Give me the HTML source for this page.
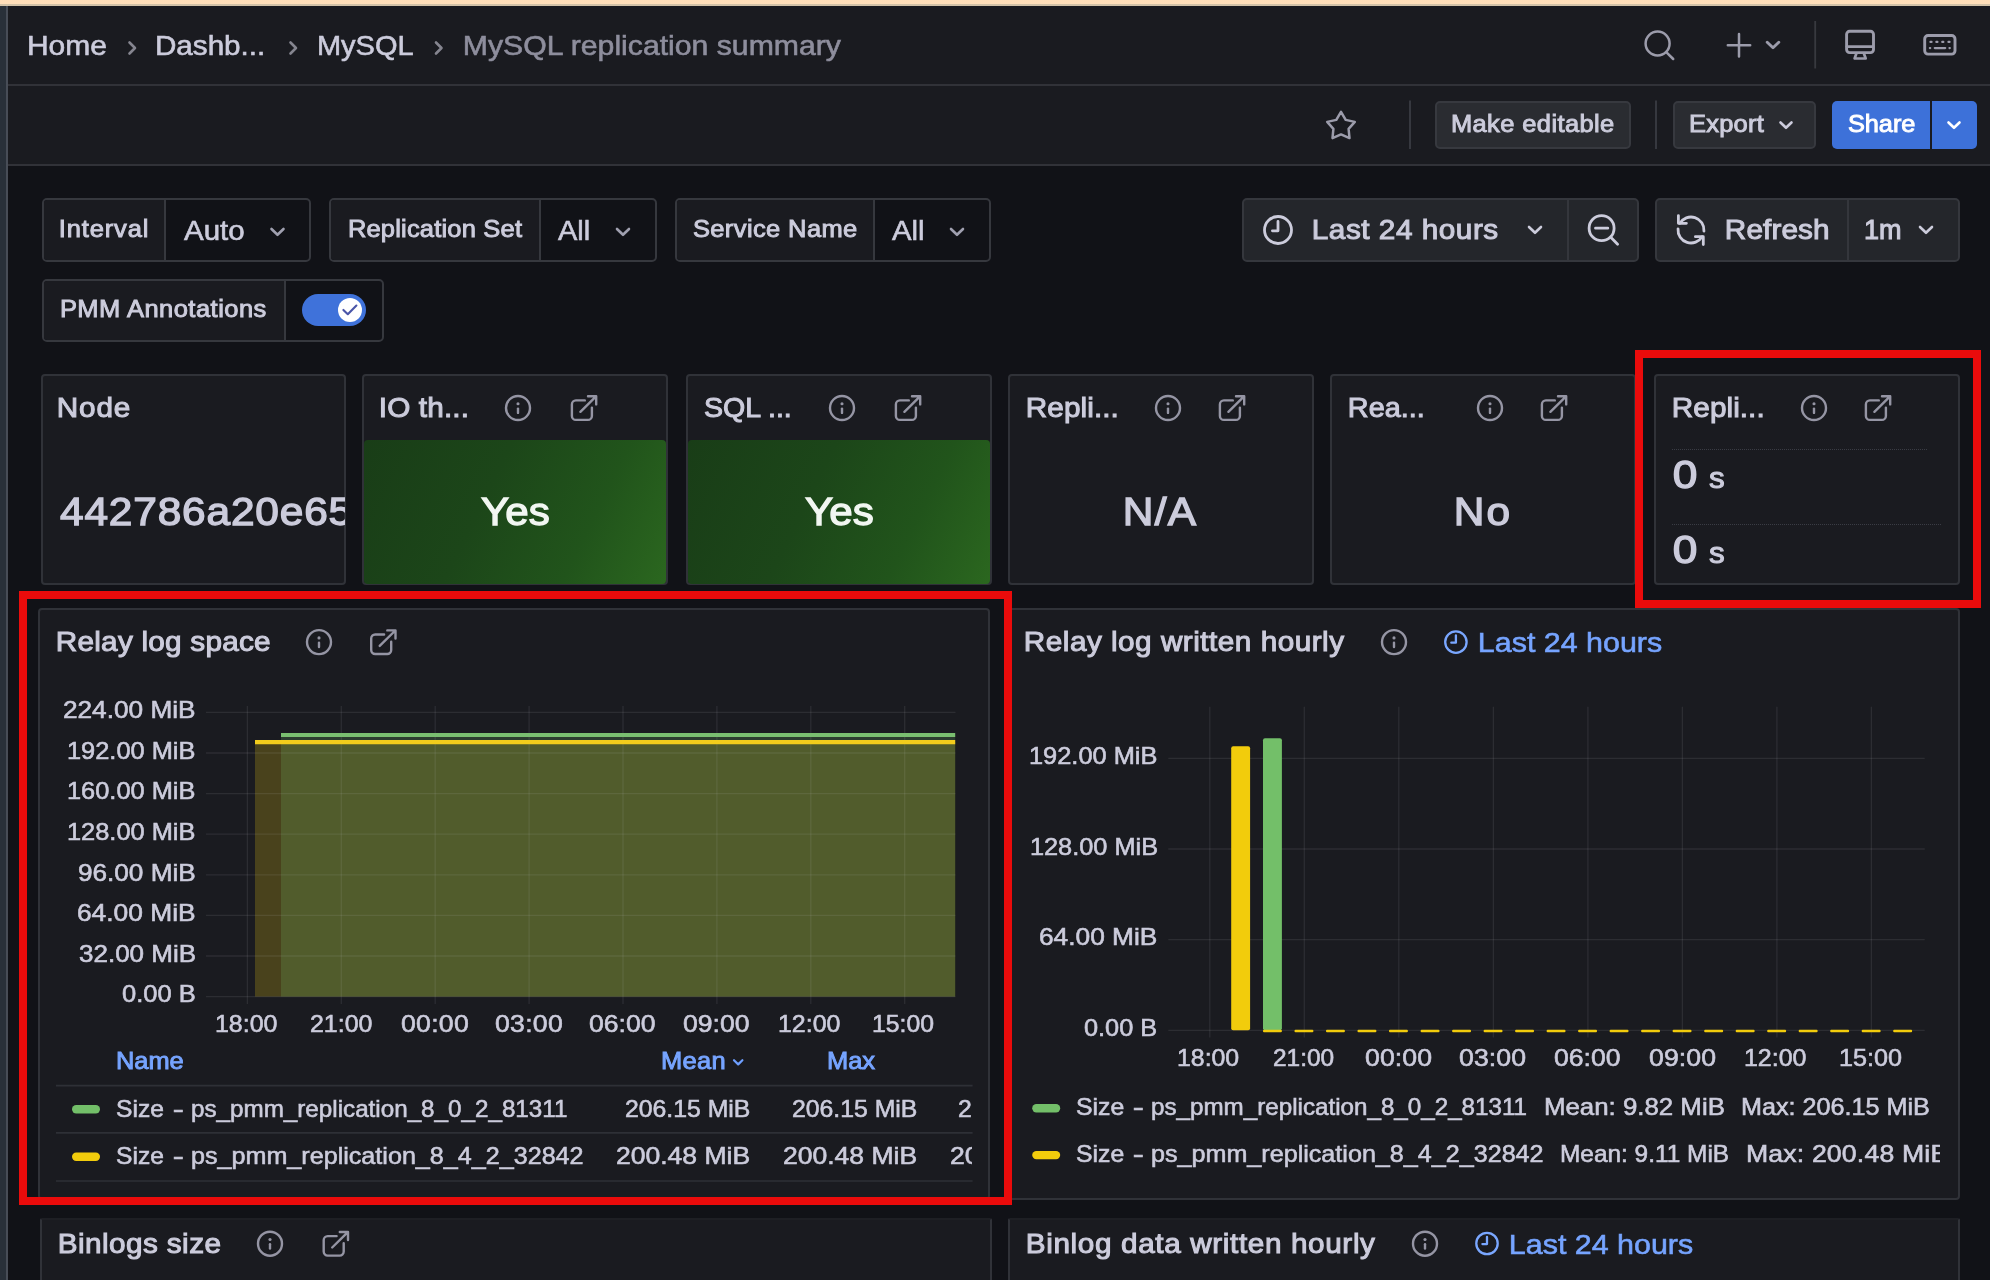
<!DOCTYPE html>
<html><head><meta charset="utf-8"><title>MySQL replication summary</title>
<style>
html,body{margin:0;padding:0;background:#111217;}
body{width:1990px;height:1280px;overflow:hidden;font-family:"Liberation Sans",sans-serif;}
#root{position:relative;width:1990px;height:1280px;overflow:hidden;background:#111217;}
.a{position:absolute;box-sizing:border-box;}
.t{position:absolute;white-space:nowrap;font-family:"Liberation Sans",sans-serif;}
.clip{position:absolute;overflow:hidden;}
.panel{position:absolute;box-sizing:border-box;background:#1a1b20;border:2px solid #303238;border-radius:4px;}
.vbox{position:absolute;box-sizing:border-box;border:2px solid #36383e;border-radius:5px;background:#111217;overflow:hidden;}
.vbox .lab{position:absolute;left:0;top:0;bottom:0;background:#1a1b20;border-right:2px solid #36383e;box-sizing:border-box;}
.tbox{position:absolute;box-sizing:border-box;border:2px solid #35373d;border-radius:5px;background:#24262b;overflow:hidden;}
.btn{position:absolute;box-sizing:border-box;border:2px solid #37393f;border-radius:5px;background:#2a2c31;}
.sep{position:absolute;width:1.5px;background:#34363c;}
svg{position:absolute;overflow:visible;}
.ic{fill:none;stroke:#9c9cab;stroke-width:2.5;stroke-linecap:round;stroke-linejoin:round;}
.icf{fill:none;stroke:#ccccdc;stroke-width:2.8;stroke-linecap:round;stroke-linejoin:round;}
.chev{fill:none;stroke:#b4b4c4;stroke-width:2.6;stroke-linecap:round;stroke-linejoin:round;}
.grid{stroke:#ccccdc;stroke-width:1.3;}
.red{position:absolute;box-sizing:border-box;border:8px solid #ea0b0b;}
#txt{position:absolute;left:0;top:0;width:1990px;height:1280px;will-change:transform;}

</style></head>
<body>
<div id="root">
<!-- chrome strips -->
<div class="a" style="left:0;top:0;width:1990px;height:6px;background:linear-gradient(#ffdeb8 0,#ffdfba 3.6px,#d2c1a6 4.2px,#d4c4aa 5.8px,#2a2420 6px)"></div>
<div class="a" style="left:0;top:6px;width:6px;height:1274px;background:#293039"></div>
<div class="a" style="left:6px;top:6px;width:2px;height:1274px;background:#484d57"></div>
<!-- header rows -->
<div class="a" style="left:8px;top:6px;width:1982px;height:78px;background:#1a1b20"></div>
<div class="a" style="left:8px;top:84px;width:1982px;height:2px;background:#313238"></div>
<div class="a" style="left:8px;top:86px;width:1982px;height:78px;background:#1a1b20"></div>
<div class="a" style="left:8px;top:164px;width:1982px;height:2px;background:#313238"></div>

<!-- breadcrumb chevrons -->
<svg style="left:0;top:0" width="1990" height="170">
  <g fill="none" stroke="#85858f" stroke-width="2.6" stroke-linecap="round" stroke-linejoin="round">
    <path d="M129.5 42.5 L135 48 L129.5 53.5"/>
    <path d="M290.5 42.5 L296 48 L290.5 53.5"/>
    <path d="M436 42.5 L441.5 48 L436 53.5"/>
  </g>
  <!-- search -->
  <g class="ic" stroke-width="3">
    <circle cx="1657.6" cy="43.5" r="12"/>
    <path d="M1667 52.8 L1673.2 59"/>
    <!-- plus -->
    <path d="M1739 34 V56.5 M1727.8 45.2 H1750.2"/>
    <path d="M1767.2 42.2 L1773 47.8 L1778.8 42.2" stroke-width="2.9"/>
    <!-- monitor -->
    <rect x="1846.6" y="31.3" width="26.9" height="21.3" rx="3" stroke-width="2.9"/>
    <path d="M1847 46.6 H1873" stroke-width="2.9"/>
    <path d="M1856.3 53.8 L1854.6 58.5 H1865.7 L1864 53.8" stroke-width="2.7"/>
    <!-- keyboard -->
    <rect x="1924.7" y="35.5" width="30.3" height="18.6" rx="3.4" stroke-width="2.9"/>
  </g>
  <g stroke="#9c9cab" stroke-width="2.3" stroke-linecap="round">
    <path d="M1930.5 41.9 h1 M1936.4 41.9 h1 M1942.3 41.9 h1 M1948.5 41.9 h1"/>
    <path d="M1929.9 48.1 h0.3 M1934.8 48.1 h10.4 M1949.5 48.1 h0.3"/>
  </g>
  <rect x="1814.3" y="21" width="1.8" height="47.5" fill="#38393f"/>
  <!-- star -->
  <path class="ic" stroke-width="3" d="M1341.0 111.9 L1345.7 119.9 L1354.8 121.9 L1348.6 128.9 L1349.5 138.1 L1341.0 134.4 L1332.5 138.1 L1333.4 128.9 L1327.2 121.9 L1336.3 119.9 Z"/>
  <rect x="1409.1" y="100.5" width="1.8" height="48.5" fill="#3a3c43"/>
  <rect x="1655.1" y="100.5" width="1.8" height="48.5" fill="#3a3c43"/>
</svg>

<!-- toolbar buttons -->
<div class="btn" style="left:1435px;top:101px;width:196px;height:48px"></div>
<div class="btn" style="left:1673px;top:101px;width:143px;height:48px"></div>
<div class="a" style="left:1832px;top:101px;width:98px;height:48px;background:#3d71d9;border-radius:5px 0 0 5px"></div>
<div class="a" style="left:1932px;top:101px;width:44.5px;height:48px;background:#3d71d9;border-radius:0 5px 5px 0"></div>
<svg style="left:0;top:0" width="1990" height="170">
  <path class="chev" style="stroke:#ccccdc" d="M1780.5 122.5 L1786 127.8 L1791.5 122.5"/>
  <path class="chev" stroke="#ffffff" style="stroke:#fff" d="M1948.5 122.5 L1954 127.8 L1959.5 122.5"/>
</svg>

<!-- variable boxes -->
<div class="vbox" style="left:42px;top:198px;width:268.5px;height:63.5px"><div class="lab" style="width:122px"></div></div>
<div class="vbox" style="left:329px;top:198px;width:328px;height:63.5px"><div class="lab" style="width:209.8px"></div></div>
<div class="vbox" style="left:675px;top:198px;width:315.7px;height:63.5px"><div class="lab" style="width:198.1px"></div></div>
<div class="vbox" style="left:42px;top:278.5px;width:341.5px;height:63.5px"><div class="lab" style="width:242px"></div></div>
<svg style="left:0;top:0" width="1990" height="360">
  <path class="chev" stroke-width="2.5" style="stroke:#a0a0b0" d="M271.5 229 L277.5 234.8 L283.5 229"/>
  <path class="chev" stroke-width="2.5" style="stroke:#a0a0b0" d="M617 229 L623 234.8 L629 229"/>
  <path class="chev" stroke-width="2.5" style="stroke:#a0a0b0" d="M951 229 L957 234.8 L963 229"/>
</svg>
<!-- toggle -->
<div class="a" style="left:301.9px;top:293.8px;width:64.2px;height:32.4px;border-radius:16.2px;background:#3f72da"></div>
<div class="a" style="left:337.8px;top:297.8px;width:24.4px;height:24.4px;border-radius:13px;background:#ffffff"></div>
<svg style="left:0;top:0" width="1990" height="360"><path d="M343.4 309.9 L347.8 314.2 L356.4 305.5" fill="none" stroke="#4a55a8" stroke-width="2.1" stroke-linecap="round" stroke-linejoin="round"/></svg>

<!-- time picker / refresh -->
<div class="tbox" style="left:1242px;top:198px;width:396.5px;height:63.5px"></div>
<div class="sep" style="left:1567.3px;top:199.5px;height:60.5px"></div>
<div class="tbox" style="left:1655px;top:198px;width:304.5px;height:63.5px"></div>
<div class="sep" style="left:1847.2px;top:199.5px;height:60.5px"></div>
<svg style="left:0;top:0" width="1990" height="360">
  <g class="icf">
    <circle cx="1278" cy="230" r="13.5"/>
    <path d="M1278 221.5 V230.8 H1272.4"/>
    <circle cx="1601.6" cy="228.2" r="12.5"/>
    <path d="M1595.5 228.2 H1607.8 M1611 237.6 L1617.6 244.2"/>
    <!-- refresh -->
    <path d="M1679.8 223.4 A13 13 0 0 1 1703.95 231.1 M1702.2 236.6 A13 13 0 0 1 1678.05 228.9"/>
    <path d="M1678.4 215.6 V223.3 H1686.4 M1703.3 244.6 V236.7 H1695.4"/>
  </g>
  <path class="chev" style="stroke:#ccccdc" d="M1529 227 L1535 232.8 L1541 227"/>
  <path class="chev" style="stroke:#ccccdc" d="M1920 227 L1926 232.8 L1932 227"/>
</svg>

<!-- stat panels -->
<div class="panel" style="left:40.5px;top:374.3px;width:305.5px;height:211.2px"></div>
<div class="panel" style="left:362px;top:374.3px;width:305.8px;height:211.2px"></div>
<div class="panel" style="left:686px;top:374.3px;width:305.8px;height:211.2px"></div>
<div class="panel" style="left:1008.2px;top:374.3px;width:305.8px;height:211.2px"></div>
<div class="panel" style="left:1330.4px;top:374.3px;width:305.8px;height:211.2px"></div>
<div class="panel" style="left:1654px;top:374.3px;width:305.8px;height:211.2px"></div>
<div class="a" style="left:363.6px;top:440px;width:302.6px;height:143.8px;border-radius:4px;background:linear-gradient(116deg,#193d17 0%,#1c4619 40%,#21541b 72%,#2b671f 100%)"></div>
<div class="a" style="left:687.6px;top:440px;width:302.6px;height:143.8px;border-radius:4px;background:linear-gradient(116deg,#193d17 0%,#1c4619 40%,#21541b 72%,#2b671f 100%)"></div>
<div class="a" style="left:1672px;top:449.4px;width:255px;height:0;border-top:1.2px dotted #3a3c44"></div>
<div class="a" style="left:1672px;top:524.4px;width:269px;height:0;border-top:1.2px dotted #3a3c44"></div>

<!-- graph panels -->
<div class="panel" style="left:38.3px;top:608.3px;width:952px;height:591.7px"></div>
<div class="panel" style="left:1008.2px;top:608.3px;width:951.8px;height:591.7px"></div>
<div class="panel" style="left:40px;top:1217.5px;width:952px;height:100px;border-top-color:#1e1f24;border-radius:2px"></div>
<div class="panel" style="left:1008.2px;top:1217.5px;width:951.6px;height:100px;border-top-color:#1e1f24;border-radius:2px"></div>
<!--GEN-->
<svg style="left:0;top:0" width="1990" height="1280">
<g fill="none" stroke="#9595a4" stroke-width="2.4" stroke-linecap="round"><circle cx="518" cy="408" r="12"/><path d="M518 408.6 V412.9"/></g><circle cx="518" cy="403.8" r="1.55" fill="#9595a4"/>
<g fill="none" stroke="#9595a4" stroke-width="2.4" stroke-linecap="round" stroke-linejoin="round"><path d="M584.8000000000001 400.4 H575.9 a4 4 0 0 0 -4 4 V415.9 a4 4 0 0 0 4 4 H587.9 a4 4 0 0 0 4 -4 V407.59999999999997"/><path d="M580.4 411.79999999999995 L596.0 396.4 M588.0 396.29999999999995 H596.2 V404.4"/></g>
<g fill="none" stroke="#9595a4" stroke-width="2.4" stroke-linecap="round"><circle cx="842" cy="408" r="12"/><path d="M842 408.6 V412.9"/></g><circle cx="842" cy="403.8" r="1.55" fill="#9595a4"/>
<g fill="none" stroke="#9595a4" stroke-width="2.4" stroke-linecap="round" stroke-linejoin="round"><path d="M908.8000000000001 400.4 H899.9 a4 4 0 0 0 -4 4 V415.9 a4 4 0 0 0 4 4 H911.9 a4 4 0 0 0 4 -4 V407.59999999999997"/><path d="M904.4 411.79999999999995 L920.0 396.4 M912.0 396.29999999999995 H920.2 V404.4"/></g>
<g fill="none" stroke="#9595a4" stroke-width="2.4" stroke-linecap="round"><circle cx="1168" cy="408" r="12"/><path d="M1168 408.6 V412.9"/></g><circle cx="1168" cy="403.8" r="1.55" fill="#9595a4"/>
<g fill="none" stroke="#9595a4" stroke-width="2.4" stroke-linecap="round" stroke-linejoin="round"><path d="M1232.8 400.4 H1223.8999999999999 a4 4 0 0 0 -4 4 V415.9 a4 4 0 0 0 4 4 H1235.8999999999999 a4 4 0 0 0 4 -4 V407.59999999999997"/><path d="M1228.3999999999999 411.79999999999995 L1244.0 396.4 M1236.0 396.29999999999995 H1244.1999999999998 V404.4"/></g>
<g fill="none" stroke="#9595a4" stroke-width="2.4" stroke-linecap="round"><circle cx="1490" cy="408" r="12"/><path d="M1490 408.6 V412.9"/></g><circle cx="1490" cy="403.8" r="1.55" fill="#9595a4"/>
<g fill="none" stroke="#9595a4" stroke-width="2.4" stroke-linecap="round" stroke-linejoin="round"><path d="M1554.8 400.4 H1545.8999999999999 a4 4 0 0 0 -4 4 V415.9 a4 4 0 0 0 4 4 H1557.8999999999999 a4 4 0 0 0 4 -4 V407.59999999999997"/><path d="M1550.3999999999999 411.79999999999995 L1566.0 396.4 M1558.0 396.29999999999995 H1566.1999999999998 V404.4"/></g>
<g fill="none" stroke="#9595a4" stroke-width="2.4" stroke-linecap="round"><circle cx="1814" cy="408" r="12"/><path d="M1814 408.6 V412.9"/></g><circle cx="1814" cy="403.8" r="1.55" fill="#9595a4"/>
<g fill="none" stroke="#9595a4" stroke-width="2.4" stroke-linecap="round" stroke-linejoin="round"><path d="M1878.8 400.4 H1869.8999999999999 a4 4 0 0 0 -4 4 V415.9 a4 4 0 0 0 4 4 H1881.8999999999999 a4 4 0 0 0 4 -4 V407.59999999999997"/><path d="M1874.3999999999999 411.79999999999995 L1890.0 396.4 M1882.0 396.29999999999995 H1890.1999999999998 V404.4"/></g>
<g fill="none" stroke="#9595a4" stroke-width="2.4" stroke-linecap="round"><circle cx="319" cy="642.1" r="12"/><path d="M319 642.7 V647.0"/></g><circle cx="319" cy="637.9" r="1.55" fill="#9595a4"/>
<g fill="none" stroke="#9595a4" stroke-width="2.4" stroke-linecap="round" stroke-linejoin="round"><path d="M384.09999999999997 634.5 H375.2 a4 4 0 0 0 -4 4 V650.0 a4 4 0 0 0 4 4 H387.2 a4 4 0 0 0 4 -4 V641.7"/><path d="M379.7 645.9 L395.29999999999995 630.5 M387.29999999999995 630.4 H395.5 V638.5"/></g>
<g fill="none" stroke="#9595a4" stroke-width="2.4" stroke-linecap="round"><circle cx="1394" cy="642.1" r="12"/><path d="M1394 642.7 V647.0"/></g><circle cx="1394" cy="637.9" r="1.55" fill="#9595a4"/>
<g fill="none" stroke="#7aa7ff" stroke-width="2.3" stroke-linecap="round" stroke-linejoin="round"><circle cx="1455.9" cy="642.1" r="10.7"/><path d="M1455.9 635.5 V642.7 H1451.3000000000002"/></g>
<g fill="none" stroke="#9595a4" stroke-width="2.4" stroke-linecap="round"><circle cx="270" cy="1243.7" r="12"/><path d="M270 1244.3 V1248.6000000000001"/></g><circle cx="270" cy="1239.5" r="1.55" fill="#9595a4"/>
<g fill="none" stroke="#9595a4" stroke-width="2.4" stroke-linecap="round" stroke-linejoin="round"><path d="M336.59999999999997 1236.1 H327.7 a4 4 0 0 0 -4 4 V1251.6 a4 4 0 0 0 4 4 H339.7 a4 4 0 0 0 4 -4 V1243.3"/><path d="M332.2 1247.5 L347.79999999999995 1232.1 M339.79999999999995 1232.0 H348.0 V1240.1"/></g>
<g fill="none" stroke="#9595a4" stroke-width="2.4" stroke-linecap="round"><circle cx="1425" cy="1243.7" r="12"/><path d="M1425 1244.3 V1248.6000000000001"/></g><circle cx="1425" cy="1239.5" r="1.55" fill="#9595a4"/>
<g fill="none" stroke="#7aa7ff" stroke-width="2.3" stroke-linecap="round" stroke-linejoin="round"><circle cx="1487" cy="1243.5" r="10.7"/><path d="M1487 1236.9 V1244.1 H1482.4"/></g>
</svg>
<svg style="left:0;top:0" width="1990" height="1280">
<rect x="255" y="742.2" width="700.2" height="254.4" fill="#f2cc0c" fill-opacity="0.22"/>
<rect x="281" y="735.0" width="674.2" height="261.6" fill="#73bf69" fill-opacity="0.21"/>
<line class="grid" x1="206" x2="955.5" y1="996.6" y2="996.6" stroke-opacity="0.10"/>
<line class="grid" x1="206" x2="955.5" y1="956.0" y2="956.0" stroke-opacity="0.10"/>
<line class="grid" x1="206" x2="955.5" y1="915.4" y2="915.4" stroke-opacity="0.10"/>
<line class="grid" x1="206" x2="955.5" y1="874.8" y2="874.8" stroke-opacity="0.10"/>
<line class="grid" x1="206" x2="955.5" y1="834.2" y2="834.2" stroke-opacity="0.10"/>
<line class="grid" x1="206" x2="955.5" y1="793.6" y2="793.6" stroke-opacity="0.10"/>
<line class="grid" x1="206" x2="955.5" y1="753.0" y2="753.0" stroke-opacity="0.10"/>
<line class="grid" x1="206" x2="955.5" y1="712.4" y2="712.4" stroke-opacity="0.10"/>
<line class="grid" x1="247.4" x2="247.4" y1="706" y2="1004" stroke-opacity="0.10"/>
<line class="grid" x1="341.3" x2="341.3" y1="706" y2="1004" stroke-opacity="0.10"/>
<line class="grid" x1="435.2" x2="435.2" y1="706" y2="1004" stroke-opacity="0.10"/>
<line class="grid" x1="529.1" x2="529.1" y1="706" y2="1004" stroke-opacity="0.10"/>
<line class="grid" x1="623.0" x2="623.0" y1="706" y2="1004" stroke-opacity="0.10"/>
<line class="grid" x1="716.9" x2="716.9" y1="706" y2="1004" stroke-opacity="0.10"/>
<line class="grid" x1="810.8" x2="810.8" y1="706" y2="1004" stroke-opacity="0.10"/>
<line class="grid" x1="904.7" x2="904.7" y1="706" y2="1004" stroke-opacity="0.10"/>
<line x1="281" x2="955.2" y1="735.0" y2="735.0" stroke="#7abf70" stroke-width="4.1"/>
<line x1="255" x2="955.2" y1="742.2" y2="742.2" stroke="#f2cc1c" stroke-width="4.2"/>
<line x1="56" x2="972.6" y1="1085.6" y2="1085.6" stroke="#2e3036" stroke-width="1.6"/>
<line x1="56" x2="972.6" y1="1132.9" y2="1132.9" stroke="#2e3036" stroke-width="1.6"/>
<line x1="56" x2="972.6" y1="1181" y2="1181" stroke="#2e3036" stroke-width="1.6"/>
<rect x="72" y="1105" width="28" height="8.4" rx="4.2" fill="#73bf69"/>
<rect x="72" y="1152.6" width="28" height="8.4" rx="4.2" fill="#f2cc0c"/>
<path d="M734 1060.2 L738.2 1064.4 L742.4 1060.2" fill="none" stroke="#6e9fff" stroke-width="2.2" stroke-linecap="round" stroke-linejoin="round"/>
</svg>
<svg style="left:0;top:0" width="1990" height="1280">
<line class="grid" x1="1168.3" x2="1924.7" y1="1030.3" y2="1030.3" stroke-opacity="0.10"/>
<line class="grid" x1="1168.3" x2="1924.7" y1="939.6" y2="939.6" stroke-opacity="0.10"/>
<line class="grid" x1="1168.3" x2="1924.7" y1="849.0" y2="849.0" stroke-opacity="0.10"/>
<line class="grid" x1="1168.3" x2="1924.7" y1="758.3" y2="758.3" stroke-opacity="0.10"/>
<line class="grid" x1="1209.8" x2="1209.8" y1="706.8" y2="1037.5" stroke-opacity="0.10"/>
<line class="grid" x1="1304.3" x2="1304.3" y1="706.8" y2="1037.5" stroke-opacity="0.10"/>
<line class="grid" x1="1398.8" x2="1398.8" y1="706.8" y2="1037.5" stroke-opacity="0.10"/>
<line class="grid" x1="1493.4" x2="1493.4" y1="706.8" y2="1037.5" stroke-opacity="0.10"/>
<line class="grid" x1="1587.9" x2="1587.9" y1="706.8" y2="1037.5" stroke-opacity="0.10"/>
<line class="grid" x1="1682.4" x2="1682.4" y1="706.8" y2="1037.5" stroke-opacity="0.10"/>
<line class="grid" x1="1776.9" x2="1776.9" y1="706.8" y2="1037.5" stroke-opacity="0.10"/>
<line class="grid" x1="1871.4" x2="1871.4" y1="706.8" y2="1037.5" stroke-opacity="0.10"/>
<rect x="1231.2" y="746.3" width="18.9" height="284.0" rx="2" fill="#f2cc0c"/>
<rect x="1263" y="738.3" width="18.9" height="292.0" rx="2" fill="#73bf69"/>
<rect x="1263.0" y="1029.7" width="18.9" height="2.6" rx="1" fill="#f2cc0c"/>
<rect x="1294.5" y="1029.7" width="18.9" height="2.6" rx="1" fill="#f2cc0c"/>
<rect x="1326.0" y="1029.7" width="18.9" height="2.6" rx="1" fill="#f2cc0c"/>
<rect x="1357.5" y="1029.7" width="18.9" height="2.6" rx="1" fill="#f2cc0c"/>
<rect x="1389.0" y="1029.7" width="18.9" height="2.6" rx="1" fill="#f2cc0c"/>
<rect x="1420.6" y="1029.7" width="18.9" height="2.6" rx="1" fill="#f2cc0c"/>
<rect x="1452.1" y="1029.7" width="18.9" height="2.6" rx="1" fill="#f2cc0c"/>
<rect x="1483.6" y="1029.7" width="18.9" height="2.6" rx="1" fill="#f2cc0c"/>
<rect x="1515.1" y="1029.7" width="18.9" height="2.6" rx="1" fill="#f2cc0c"/>
<rect x="1546.6" y="1029.7" width="18.9" height="2.6" rx="1" fill="#f2cc0c"/>
<rect x="1578.1" y="1029.7" width="18.9" height="2.6" rx="1" fill="#f2cc0c"/>
<rect x="1609.6" y="1029.7" width="18.9" height="2.6" rx="1" fill="#f2cc0c"/>
<rect x="1641.1" y="1029.7" width="18.9" height="2.6" rx="1" fill="#f2cc0c"/>
<rect x="1672.6" y="1029.7" width="18.9" height="2.6" rx="1" fill="#f2cc0c"/>
<rect x="1704.2" y="1029.7" width="18.9" height="2.6" rx="1" fill="#f2cc0c"/>
<rect x="1735.7" y="1029.7" width="18.9" height="2.6" rx="1" fill="#f2cc0c"/>
<rect x="1767.2" y="1029.7" width="18.9" height="2.6" rx="1" fill="#f2cc0c"/>
<rect x="1798.7" y="1029.7" width="18.9" height="2.6" rx="1" fill="#f2cc0c"/>
<rect x="1830.2" y="1029.7" width="18.9" height="2.6" rx="1" fill="#f2cc0c"/>
<rect x="1861.7" y="1029.7" width="18.9" height="2.6" rx="1" fill="#f2cc0c"/>
<rect x="1893.2" y="1029.7" width="18.9" height="2.6" rx="1" fill="#f2cc0c"/>
<rect x="1032.2" y="1104" width="28" height="8.4" rx="4.2" fill="#73bf69"/>
<rect x="1032.2" y="1150.9" width="28" height="8.4" rx="4.2" fill="#f2cc0c"/>
</svg>

<div id="txt">
<span class="t" style="left:27.30px;top:30.86px;font-size:28.28px;line-height:28.28px;letter-spacing:0.000px;color:#ccccdc;-webkit-text-stroke:0.6px #ccccdc;transform-origin:2.00px 50%;transform:scaleX(1.062);">Home</span>
<span class="t" style="left:155.30px;top:30.86px;font-size:28.28px;line-height:28.28px;letter-spacing:0.000px;color:#ccccdc;-webkit-text-stroke:0.6px #ccccdc;transform-origin:2.00px 50%;transform:scaleX(1.049);">Dashb...</span>
<span class="t" style="left:316.90px;top:30.86px;font-size:28.28px;line-height:28.28px;letter-spacing:0.000px;color:#ccccdc;-webkit-text-stroke:0.6px #ccccdc;transform-origin:2.00px 50%;transform:scaleX(1.025);">MySQL</span>
<span class="t" style="left:462.70px;top:30.86px;font-size:28.28px;line-height:28.28px;letter-spacing:0.000px;color:#8e8e9d;-webkit-text-stroke:0.6px #8e8e9d;transform-origin:2.00px 50%;transform:scaleX(1.068);">MySQL replication summary</span>
<span class="t" style="left:1451.25px;top:112.97px;font-size:23.16px;line-height:23.16px;letter-spacing:0.362px;color:#ccccdc;-webkit-text-stroke:0.9px #ccccdc;transform-origin:1.00px 50%;transform:scaleX(1.100);">Make editable</span>
<span class="t" style="left:1689.25px;top:112.97px;font-size:23.16px;line-height:23.16px;letter-spacing:0.247px;color:#ccccdc;-webkit-text-stroke:0.9px #ccccdc;transform-origin:1.00px 50%;transform:scaleX(1.100);">Export</span>
<span class="t" style="left:1848.25px;top:112.97px;font-size:23.16px;line-height:23.16px;letter-spacing:0.000px;color:#ffffff;-webkit-text-stroke:0.9px #ffffff;transform-origin:1.00px 50%;transform:scaleX(1.093);">Share</span>
<span class="t" style="left:58.95px;top:218.47px;font-size:23.16px;line-height:23.16px;letter-spacing:0.783px;color:#ccccdc;-webkit-text-stroke:0.9px #ccccdc;transform-origin:2.00px 50%;transform:scaleX(1.100);">Interval</span>
<span class="t" style="left:183.80px;top:215.76px;font-size:28.28px;line-height:28.28px;letter-spacing:0.000px;color:#ccccdc;-webkit-text-stroke:0.6px #ccccdc;transform-origin:-0.00px 50%;transform:scaleX(1.043);">Auto</span>
<span class="t" style="left:347.65px;top:218.47px;font-size:23.16px;line-height:23.16px;letter-spacing:0.179px;color:#ccccdc;-webkit-text-stroke:0.9px #ccccdc;transform-origin:1.00px 50%;transform:scaleX(1.100);">Replication Set</span>
<span class="t" style="left:558.20px;top:215.76px;font-size:28.28px;line-height:28.28px;letter-spacing:0.000px;color:#ccccdc;-webkit-text-stroke:0.6px #ccccdc;transform-origin:-0.00px 50%;transform:scaleX(1.025);">All</span>
<span class="t" style="left:692.65px;top:218.47px;font-size:23.16px;line-height:23.16px;letter-spacing:0.364px;color:#ccccdc;-webkit-text-stroke:0.9px #ccccdc;transform-origin:1.00px 50%;transform:scaleX(1.100);">Service Name</span>
<span class="t" style="left:891.90px;top:215.76px;font-size:28.28px;line-height:28.28px;letter-spacing:0.000px;color:#ccccdc;-webkit-text-stroke:0.6px #ccccdc;transform-origin:-0.00px 50%;transform:scaleX(1.035);">All</span>
<span class="t" style="left:59.95px;top:298.47px;font-size:23.16px;line-height:23.16px;letter-spacing:0.441px;color:#ccccdc;-webkit-text-stroke:0.9px #ccccdc;transform-origin:1.00px 50%;transform:scaleX(1.100);">PMM Annotations</span>
<span class="t" style="left:1311.90px;top:216.58px;font-size:27.02px;line-height:27.02px;letter-spacing:0.476px;color:#ccccdc;-webkit-text-stroke:1.0px #ccccdc;transform-origin:2.00px 50%;transform:scaleX(1.100);">Last 24 hours</span>
<span class="t" style="left:1725.20px;top:216.58px;font-size:27.02px;line-height:27.02px;letter-spacing:0.117px;color:#ccccdc;-webkit-text-stroke:1.0px #ccccdc;transform-origin:2.00px 50%;transform:scaleX(1.100);">Refresh</span>
<span class="t" style="left:1863.90px;top:216.58px;font-size:27.02px;line-height:27.02px;letter-spacing:0.000px;color:#ccccdc;-webkit-text-stroke:1.0px #ccccdc;transform-origin:2.00px 50%;transform:scaleX(1.002);">1m</span>
<span class="t" style="left:57.40px;top:394.68px;font-size:27.02px;line-height:27.02px;letter-spacing:0.723px;color:#ccccdc;-webkit-text-stroke:1.0px #ccccdc;transform-origin:2.00px 50%;transform:scaleX(1.100);">Node</span>
<span class="t" style="left:379.20px;top:394.68px;font-size:27.02px;line-height:27.02px;letter-spacing:0.127px;color:#ccccdc;-webkit-text-stroke:1.0px #ccccdc;transform-origin:2.00px 50%;transform:scaleX(1.100);">IO th...</span>
<span class="t" style="left:703.80px;top:394.68px;font-size:27.02px;line-height:27.02px;letter-spacing:0.000px;color:#ccccdc;-webkit-text-stroke:1.0px #ccccdc;transform-origin:1.00px 50%;transform:scaleX(1.057);">SQL ...</span>
<span class="t" style="left:1025.70px;top:394.68px;font-size:27.02px;line-height:27.02px;letter-spacing:0.074px;color:#ccccdc;-webkit-text-stroke:1.0px #ccccdc;transform-origin:2.00px 50%;transform:scaleX(1.100);">Repli...</span>
<span class="t" style="left:1347.80px;top:394.68px;font-size:27.02px;line-height:27.02px;letter-spacing:0.000px;color:#ccccdc;-webkit-text-stroke:1.0px #ccccdc;transform-origin:2.00px 50%;transform:scaleX(1.066);">Rea...</span>
<span class="t" style="left:1671.50px;top:394.68px;font-size:27.02px;line-height:27.02px;letter-spacing:0.048px;color:#ccccdc;-webkit-text-stroke:1.0px #ccccdc;transform-origin:2.00px 50%;transform:scaleX(1.100);">Repli...</span>
<div class="clip" style="left:58.25px;top:486.80px;width:286.25px;height:50.6px"><span class="t" style="left:2px;top:6px;font-size:38.6px;line-height:38.6px;letter-spacing:0.743px;color:#ccccdc;-webkit-text-stroke:1.3px #ccccdc;transform-origin:-0.00px 50%;transform:scaleX(1.100);">442786a20e65</span></div>
<span class="t" style="left:481.25px;top:492.80px;font-size:38.6px;line-height:38.6px;letter-spacing:-0.000px;color:#f2f7f2;-webkit-text-stroke:1.3px #f2f7f2;transform-origin:-0.00px 50%;transform:scaleX(1.092);">Yes</span>
<span class="t" style="left:805.25px;top:492.80px;font-size:38.6px;line-height:38.6px;letter-spacing:-0.000px;color:#f2f7f2;-webkit-text-stroke:1.3px #f2f7f2;transform-origin:-0.00px 50%;transform:scaleX(1.092);">Yes</span>
<span class="t" style="left:1123.35px;top:492.80px;font-size:38.6px;line-height:38.6px;letter-spacing:1.165px;color:#ccccdc;-webkit-text-stroke:1.3px #ccccdc;transform-origin:3.00px 50%;transform:scaleX(1.100);">N/A</span>
<span class="t" style="left:1453.95px;top:492.80px;font-size:38.6px;line-height:38.6px;letter-spacing:1.867px;color:#ccccdc;-webkit-text-stroke:1.3px #ccccdc;transform-origin:3.00px 50%;transform:scaleX(1.100);">No</span>
<span class="t" style="left:1673.05px;top:455.70px;font-size:38.6px;line-height:38.6px;letter-spacing:0.000px;color:#ccccdc;-webkit-text-stroke:1.3px #ccccdc;transform-origin:1.00px 50%;transform:scaleX(1.147);">0</span>
<span class="t" style="left:1708.50px;top:463.13px;font-size:29.91px;line-height:29.91px;letter-spacing:0.000px;color:#ccccdc;-webkit-text-stroke:1.0px #ccccdc;transform-origin:-0.00px 50%;transform:scaleX(1.050);">s</span>
<span class="t" style="left:1673.05px;top:530.60px;font-size:38.6px;line-height:38.6px;letter-spacing:0.000px;color:#ccccdc;-webkit-text-stroke:1.3px #ccccdc;transform-origin:1.00px 50%;transform:scaleX(1.147);">0</span>
<span class="t" style="left:1708.50px;top:538.03px;font-size:29.91px;line-height:29.91px;letter-spacing:0.000px;color:#ccccdc;-webkit-text-stroke:1.0px #ccccdc;transform-origin:-0.00px 50%;transform:scaleX(1.050);">s</span>
<span class="t" style="left:55.50px;top:628.88px;font-size:27.02px;line-height:27.02px;letter-spacing:0.220px;color:#ccccdc;-webkit-text-stroke:1.0px #ccccdc;transform-origin:2.00px 50%;transform:scaleX(1.100);">Relay log space</span>
<span class="t" style="left:1023.60px;top:628.88px;font-size:27.02px;line-height:27.02px;letter-spacing:0.450px;color:#ccccdc;-webkit-text-stroke:1.0px #ccccdc;transform-origin:2.00px 50%;transform:scaleX(1.100);">Relay log written hourly</span>
<span class="t" style="left:1477.50px;top:627.96px;font-size:28.28px;line-height:28.28px;letter-spacing:0.000px;color:#76a4ff;-webkit-text-stroke:0.6px #76a4ff;transform-origin:2.00px 50%;transform:scaleX(1.076);">Last 24 hours</span>
<span class="t" style="left:57.50px;top:1230.98px;font-size:27.02px;line-height:27.02px;letter-spacing:0.377px;color:#ccccdc;-webkit-text-stroke:1.0px #ccccdc;transform-origin:2.00px 50%;transform:scaleX(1.100);">Binlogs size</span>
<span class="t" style="left:1025.60px;top:1230.98px;font-size:27.02px;line-height:27.02px;letter-spacing:0.563px;color:#ccccdc;-webkit-text-stroke:1.0px #ccccdc;transform-origin:2.00px 50%;transform:scaleX(1.100);">Binlog data written hourly</span>
<span class="t" style="left:1508.50px;top:1230.06px;font-size:28.28px;line-height:28.28px;letter-spacing:0.000px;color:#76a4ff;-webkit-text-stroke:0.6px #76a4ff;transform-origin:2.00px 50%;transform:scaleX(1.076);">Last 24 hours</span>
<span class="t" style="left:122.10px;top:982.18px;font-size:24.24px;line-height:24.24px;letter-spacing:0.000px;color:#ccccdc;-webkit-text-stroke:0.6px #ccccdc;transform-origin:-0.00px 50%;transform:scaleX(1.052);">0.00 B</span>
<span class="t" style="left:78.80px;top:941.63px;font-size:24.24px;line-height:24.24px;letter-spacing:0.000px;color:#ccccdc;-webkit-text-stroke:0.6px #ccccdc;transform-origin:-0.00px 50%;transform:scaleX(1.073);">32.00 MiB</span>
<span class="t" style="left:77.20px;top:901.08px;font-size:24.24px;line-height:24.24px;letter-spacing:0.000px;color:#ccccdc;-webkit-text-stroke:0.6px #ccccdc;transform-origin:1.00px 50%;transform:scaleX(1.088);">64.00 MiB</span>
<span class="t" style="left:78.10px;top:860.53px;font-size:24.24px;line-height:24.24px;letter-spacing:0.000px;color:#ccccdc;-webkit-text-stroke:0.6px #ccccdc;transform-origin:1.00px 50%;transform:scaleX(1.080);">96.00 MiB</span>
<span class="t" style="left:67.40px;top:819.98px;font-size:24.24px;line-height:24.24px;letter-spacing:0.000px;color:#ccccdc;-webkit-text-stroke:0.6px #ccccdc;transform-origin:1.00px 50%;transform:scaleX(1.048);">128.00 MiB</span>
<span class="t" style="left:67.40px;top:779.43px;font-size:24.24px;line-height:24.24px;letter-spacing:0.000px;color:#ccccdc;-webkit-text-stroke:0.6px #ccccdc;transform-origin:1.00px 50%;transform:scaleX(1.048);">160.00 MiB</span>
<span class="t" style="left:67.40px;top:738.88px;font-size:24.24px;line-height:24.24px;letter-spacing:0.000px;color:#ccccdc;-webkit-text-stroke:0.6px #ccccdc;transform-origin:1.00px 50%;transform:scaleX(1.048);">192.00 MiB</span>
<span class="t" style="left:63.30px;top:698.33px;font-size:24.24px;line-height:24.24px;letter-spacing:0.000px;color:#ccccdc;-webkit-text-stroke:0.6px #ccccdc;transform-origin:1.00px 50%;transform:scaleX(1.082);">224.00 MiB</span>
<span class="t" style="left:215.30px;top:1012.38px;font-size:24.24px;line-height:24.24px;letter-spacing:0.000px;color:#ccccdc;-webkit-text-stroke:0.6px #ccccdc;transform-origin:1.00px 50%;transform:scaleX(1.031);">18:00</span>
<span class="t" style="left:309.60px;top:1012.38px;font-size:24.24px;line-height:24.24px;letter-spacing:0.000px;color:#ccccdc;-webkit-text-stroke:0.6px #ccccdc;transform-origin:1.00px 50%;transform:scaleX(1.029);">21:00</span>
<span class="t" style="left:401.00px;top:1012.38px;font-size:24.24px;line-height:24.24px;letter-spacing:0.231px;color:#ccccdc;-webkit-text-stroke:0.6px #ccccdc;transform-origin:-0.00px 50%;transform:scaleX(1.100);">00:00</span>
<span class="t" style="left:494.80px;top:1012.38px;font-size:24.24px;line-height:24.24px;letter-spacing:0.231px;color:#ccccdc;-webkit-text-stroke:0.6px #ccccdc;transform-origin:-0.00px 50%;transform:scaleX(1.100);">03:00</span>
<span class="t" style="left:589.00px;top:1012.38px;font-size:24.24px;line-height:24.24px;letter-spacing:0.000px;color:#ccccdc;-webkit-text-stroke:0.6px #ccccdc;transform-origin:-0.00px 50%;transform:scaleX(1.097);">06:00</span>
<span class="t" style="left:683.30px;top:1012.38px;font-size:24.24px;line-height:24.24px;letter-spacing:0.000px;color:#ccccdc;-webkit-text-stroke:0.6px #ccccdc;transform-origin:-0.00px 50%;transform:scaleX(1.097);">09:00</span>
<span class="t" style="left:778.40px;top:1012.38px;font-size:24.24px;line-height:24.24px;letter-spacing:0.000px;color:#ccccdc;-webkit-text-stroke:0.6px #ccccdc;transform-origin:1.00px 50%;transform:scaleX(1.029);">12:00</span>
<span class="t" style="left:871.90px;top:1012.38px;font-size:24.24px;line-height:24.24px;letter-spacing:-0.000px;color:#ccccdc;-webkit-text-stroke:0.6px #ccccdc;transform-origin:1.00px 50%;transform:scaleX(1.021);">15:00</span>
<span class="t" style="left:116.25px;top:1049.97px;font-size:23.16px;line-height:23.16px;letter-spacing:0.000px;color:#76a4ff;-webkit-text-stroke:0.9px #76a4ff;transform-origin:1.00px 50%;transform:scaleX(1.097);">Name</span>
<span class="t" style="left:660.65px;top:1049.97px;font-size:23.16px;line-height:23.16px;letter-spacing:0.318px;color:#76a4ff;-webkit-text-stroke:0.9px #76a4ff;transform-origin:1.00px 50%;transform:scaleX(1.100);">Mean</span>
<span class="t" style="left:826.75px;top:1049.97px;font-size:23.16px;line-height:23.16px;letter-spacing:0.007px;color:#76a4ff;-webkit-text-stroke:0.9px #76a4ff;transform-origin:1.00px 50%;transform:scaleX(1.100);">Max</span>
<span class="t" style="left:116.10px;top:1097.28px;font-size:24.24px;line-height:24.24px;letter-spacing:0.000px;color:#ccccdc;-webkit-text-stroke:0.6px #ccccdc;transform-origin:1.00px 50%;transform:scaleX(1.016);">Size</span>
<span class="t" style="left:172.60px;top:1097.28px;font-size:24.24px;line-height:24.24px;letter-spacing:0.000px;color:#ccccdc;-webkit-text-stroke:0.6px #ccccdc;transform-origin:1.00px 50%;transform:scaleX(1.367);">-</span>
<span class="t" style="left:190.70px;top:1097.28px;font-size:24.24px;line-height:24.24px;letter-spacing:0.000px;color:#ccccdc;-webkit-text-stroke:0.6px #ccccdc;transform-origin:1.00px 50%;transform:scaleX(0.999);">ps_pmm_replication_8_0_2_81311</span>
<span class="t" style="left:116.10px;top:1144.28px;font-size:24.24px;line-height:24.24px;letter-spacing:0.000px;color:#ccccdc;-webkit-text-stroke:0.6px #ccccdc;transform-origin:1.00px 50%;transform:scaleX(1.016);">Size</span>
<span class="t" style="left:172.60px;top:1144.28px;font-size:24.24px;line-height:24.24px;letter-spacing:0.000px;color:#ccccdc;-webkit-text-stroke:0.6px #ccccdc;transform-origin:1.00px 50%;transform:scaleX(1.367);">-</span>
<span class="t" style="left:190.70px;top:1144.28px;font-size:24.24px;line-height:24.24px;letter-spacing:0.000px;color:#ccccdc;-webkit-text-stroke:0.6px #ccccdc;transform-origin:1.00px 50%;transform:scaleX(1.037);">ps_pmm_replication_8_4_2_32842</span>
<span class="t" style="left:625.10px;top:1097.28px;font-size:24.24px;line-height:24.24px;letter-spacing:0.000px;color:#ccccdc;-webkit-text-stroke:0.6px #ccccdc;transform-origin:1.00px 50%;transform:scaleX(1.023);">206.15 MiB</span>
<span class="t" style="left:791.70px;top:1097.28px;font-size:24.24px;line-height:24.24px;letter-spacing:0.000px;color:#ccccdc;-webkit-text-stroke:0.6px #ccccdc;transform-origin:1.00px 50%;transform:scaleX(1.023);">206.15 MiB</span>
<span class="t" style="left:616.40px;top:1144.28px;font-size:24.24px;line-height:24.24px;letter-spacing:0.000px;color:#ccccdc;-webkit-text-stroke:0.6px #ccccdc;transform-origin:1.00px 50%;transform:scaleX(1.095);">200.48 MiB</span>
<span class="t" style="left:783.00px;top:1144.28px;font-size:24.24px;line-height:24.24px;letter-spacing:0.000px;color:#ccccdc;-webkit-text-stroke:0.6px #ccccdc;transform-origin:1.00px 50%;transform:scaleX(1.095);">200.48 MiB</span>
<div class="clip" style="left:955.80px;top:1091.28px;width:16.20px;height:36.239999999999995px"><span class="t" style="left:2px;top:6px;font-size:24.24px;line-height:24.24px;letter-spacing:0.000px;color:#ccccdc;-webkit-text-stroke:0.6px #ccccdc;transform-origin:1.00px 50%;transform:scaleX(1.023);">206.15 MiB</span></div>
<div class="clip" style="left:947.60px;top:1138.28px;width:24.40px;height:36.239999999999995px"><span class="t" style="left:2px;top:6px;font-size:24.24px;line-height:24.24px;letter-spacing:0.000px;color:#ccccdc;-webkit-text-stroke:0.6px #ccccdc;transform-origin:1.00px 50%;transform:scaleX(1.095);">200.48 MiB</span></div>
<span class="t" style="left:1029.10px;top:744.48px;font-size:24.24px;line-height:24.24px;letter-spacing:0.000px;color:#ccccdc;-webkit-text-stroke:0.6px #ccccdc;transform-origin:1.00px 50%;transform:scaleX(1.048);">192.00 MiB</span>
<span class="t" style="left:1029.50px;top:834.98px;font-size:24.24px;line-height:24.24px;letter-spacing:0.000px;color:#ccccdc;-webkit-text-stroke:0.6px #ccccdc;transform-origin:1.00px 50%;transform:scaleX(1.045);">128.00 MiB</span>
<span class="t" style="left:1039.20px;top:925.38px;font-size:24.24px;line-height:24.24px;letter-spacing:0.000px;color:#ccccdc;-webkit-text-stroke:0.6px #ccccdc;transform-origin:1.00px 50%;transform:scaleX(1.086);">64.00 MiB</span>
<span class="t" style="left:1084.30px;top:1015.98px;font-size:24.24px;line-height:24.24px;letter-spacing:0.000px;color:#ccccdc;-webkit-text-stroke:0.6px #ccccdc;transform-origin:-0.00px 50%;transform:scaleX(1.045);">0.00 B</span>
<span class="t" style="left:1177.20px;top:1046.18px;font-size:24.24px;line-height:24.24px;letter-spacing:0.000px;color:#ccccdc;-webkit-text-stroke:0.6px #ccccdc;transform-origin:1.00px 50%;transform:scaleX(1.026);">18:00</span>
<span class="t" style="left:1273.20px;top:1046.18px;font-size:24.24px;line-height:24.24px;letter-spacing:0.000px;color:#ccccdc;-webkit-text-stroke:0.6px #ccccdc;transform-origin:1.00px 50%;transform:scaleX(1.009);">21:00</span>
<span class="t" style="left:1364.60px;top:1046.18px;font-size:24.24px;line-height:24.24px;letter-spacing:0.072px;color:#ccccdc;-webkit-text-stroke:0.6px #ccccdc;transform-origin:-0.00px 50%;transform:scaleX(1.100);">00:00</span>
<span class="t" style="left:1459.30px;top:1046.18px;font-size:24.24px;line-height:24.24px;letter-spacing:0.072px;color:#ccccdc;-webkit-text-stroke:0.6px #ccccdc;transform-origin:-0.00px 50%;transform:scaleX(1.100);">03:00</span>
<span class="t" style="left:1553.90px;top:1046.18px;font-size:24.24px;line-height:24.24px;letter-spacing:0.000px;color:#ccccdc;-webkit-text-stroke:0.6px #ccccdc;transform-origin:-0.00px 50%;transform:scaleX(1.097);">06:00</span>
<span class="t" style="left:1648.60px;top:1046.18px;font-size:24.24px;line-height:24.24px;letter-spacing:0.072px;color:#ccccdc;-webkit-text-stroke:0.6px #ccccdc;transform-origin:-0.00px 50%;transform:scaleX(1.100);">09:00</span>
<span class="t" style="left:1743.80px;top:1046.18px;font-size:24.24px;line-height:24.24px;letter-spacing:0.000px;color:#ccccdc;-webkit-text-stroke:0.6px #ccccdc;transform-origin:1.00px 50%;transform:scaleX(1.031);">12:00</span>
<span class="t" style="left:1838.50px;top:1046.18px;font-size:24.24px;line-height:24.24px;letter-spacing:-0.000px;color:#ccccdc;-webkit-text-stroke:0.6px #ccccdc;transform-origin:1.00px 50%;transform:scaleX(1.039);">15:00</span>
<span class="t" style="left:1075.90px;top:1095.18px;font-size:24.24px;line-height:24.24px;letter-spacing:0.000px;color:#ccccdc;-webkit-text-stroke:0.6px #ccccdc;transform-origin:1.00px 50%;transform:scaleX(1.023);">Size</span>
<span class="t" style="left:1132.50px;top:1095.18px;font-size:24.24px;line-height:24.24px;letter-spacing:0.000px;color:#ccccdc;-webkit-text-stroke:0.6px #ccccdc;transform-origin:1.00px 50%;transform:scaleX(1.367);">-</span>
<span class="t" style="left:1150.60px;top:1095.18px;font-size:24.24px;line-height:24.24px;letter-spacing:0.000px;color:#ccccdc;-webkit-text-stroke:0.6px #ccccdc;transform-origin:1.00px 50%;transform:scaleX(0.998);">ps_pmm_replication_8_0_2_81311</span>
<span class="t" style="left:1543.80px;top:1095.18px;font-size:24.24px;line-height:24.24px;letter-spacing:0.000px;color:#ccccdc;-webkit-text-stroke:0.6px #ccccdc;transform-origin:1.00px 50%;transform:scaleX(1.066);">Mean: 9.82 MiB</span>
<span class="t" style="left:1741.30px;top:1095.18px;font-size:24.24px;line-height:24.24px;letter-spacing:0.000px;color:#ccccdc;-webkit-text-stroke:0.6px #ccccdc;transform-origin:1.00px 50%;transform:scaleX(1.039);">Max: 206.15 MiB</span>
<span class="t" style="left:1075.90px;top:1142.18px;font-size:24.24px;line-height:24.24px;letter-spacing:0.000px;color:#ccccdc;-webkit-text-stroke:0.6px #ccccdc;transform-origin:1.00px 50%;transform:scaleX(1.023);">Size</span>
<span class="t" style="left:1132.50px;top:1142.18px;font-size:24.24px;line-height:24.24px;letter-spacing:0.000px;color:#ccccdc;-webkit-text-stroke:0.6px #ccccdc;transform-origin:1.00px 50%;transform:scaleX(1.367);">-</span>
<span class="t" style="left:1150.60px;top:1142.18px;font-size:24.24px;line-height:24.24px;letter-spacing:-0.000px;color:#ccccdc;-webkit-text-stroke:0.6px #ccccdc;transform-origin:1.00px 50%;transform:scaleX(1.037);">ps_pmm_replication_8_4_2_32842</span>
<span class="t" style="left:1560.40px;top:1142.18px;font-size:24.24px;line-height:24.24px;letter-spacing:0.000px;color:#ccccdc;-webkit-text-stroke:0.6px #ccccdc;transform-origin:1.00px 50%;transform:scaleX(1.007);">Mean: 9.11 MiB</span>
<div class="clip" style="left:1744.10px;top:1136.18px;width:195.80px;height:36.239999999999995px"><span class="t" style="left:2px;top:6px;font-size:24.24px;line-height:24.24px;letter-spacing:0.146px;color:#ccccdc;-webkit-text-stroke:0.6px #ccccdc;transform-origin:1.00px 50%;transform:scaleX(1.100);">Max: 200.48 MiB</span></div>
</div>
<!--OVERLAY-->
<div class="red" style="left:1635.2px;top:350.2px;width:346px;height:257.4px"></div>
<div class="red" style="left:19px;top:591.4px;width:992.6px;height:613.4px"></div>

</div>
</body></html>
